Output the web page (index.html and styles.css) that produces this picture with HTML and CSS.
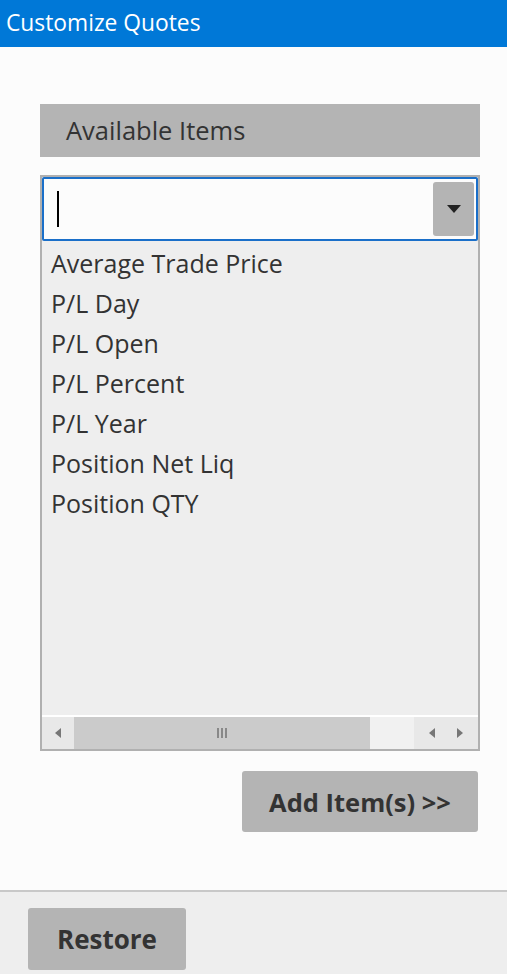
FILE: index.html
```html
<!DOCTYPE html>
<html>
<head>
<meta charset="utf-8">
<link rel="stylesheet" href="styles.css">
</head>
<body>
<div class="app">
  <header class="titlebar">Customize Quotes</header>
  <main class="content">
    <div class="section-head">Available Items</div>
    <div class="listbox">
      <div class="combo">
        <span class="caret"></span>
        <span class="drop-btn"><svg width="14" height="8" viewBox="0 0 14 8"><path d="M0 0H14L7 8Z" fill="#222"/></svg></span>
      </div>
      <ul class="items">
        <li>Average Trade Price</li>
        <li>P/L Day</li>
        <li>P/L Open</li>
        <li>P/L Percent</li>
        <li>P/L Year</li>
        <li>Position Net Liq</li>
        <li>Position QTY</li>
      </ul>
      <div class="hscroll">
        <span class="arr arr-left"><svg width="6" height="10" viewBox="0 0 6 10"><path d="M6 0V10L0 5Z" fill="#777"/></svg></span>
        <span class="thumb"><svg width="10" height="10" viewBox="0 0 10 10"><rect x="0" y="0" width="2" height="10" fill="#888"/><rect x="4" y="0" width="2" height="10" fill="#888"/><rect x="8" y="0" width="2" height="10" fill="#888"/></svg></span>
        <span class="track"></span>
        <span class="arr-pair">
          <svg width="6" height="10" viewBox="0 0 6 10"><path d="M6 0V10L0 5Z" fill="#777"/></svg>
          <svg width="6" height="10" viewBox="0 0 6 10"><path d="M0 0V10L6 5Z" fill="#777"/></svg>
        </span>
      </div>
    </div>
    <div class="actions">
      <button class="btn btn-add">Add Item(s) &gt;&gt;</button>
    </div>
  </main>
  <footer class="footer">
    <button class="btn btn-restore">Restore</button>
  </footer>
</div>
</body>
</html>
```
FILE: styles.css
```css
* { box-sizing: border-box; }
html, body { margin: 0; padding: 0; height: 100%; }
body {
  font-family: "Open Sans", "Noto Sans", sans-serif;
  background: #fcfcfc;
  color: #333;
}
.app {
  display: flex;
  flex-direction: column;
  height: 974px;
}
.titlebar {
  height: 47px;
  background: #0078d7;
  color: #fff;
  font-size: 22.8px;
  line-height: 46px;
  padding-left: 6px;
}
.content {
  flex: 1;
  padding: 57px 27px 0 40px;
}
.section-head {
  height: 53px;
  background: #b4b4b4;
  font-size: 25.5px;
  line-height: 53px;
  padding-left: 26px;
  color: #333;
}
.listbox {
  margin-top: 18px;
  height: 576px;
  border: 2px solid #b0b0b0;
  background: #eeeeee;
  display: flex;
  flex-direction: column;
}
.combo {
  height: 64px;
  border: 2px solid #1a6fc9;
  border-radius: 2px;
  background: #fcfcfc;
  display: flex;
  align-items: center;
  justify-content: space-between;
  padding: 0 2px 0 13px;
}
.caret {
  width: 2px;
  height: 36px;
  background: #000;
}
.drop-btn {
  width: 41px;
  height: 54px;
  background: #b4b4b4;
  border-radius: 3px;
  display: flex;
  align-items: center;
  justify-content: center;
}
.items {
  list-style: none;
  margin: 0;
  padding: 2px 0 0 9px;
  flex: 1;
  font-size: 25px;
  line-height: 40px;
  color: #333;
}
.hscroll {
  height: 34px;
  border-top: 2px solid #fff;
  display: flex;
  background: #e8e8e8;
}
.arr {
  width: 32px;
  display: flex;
  align-items: center;
  justify-content: center;
}
.thumb {
  width: 296px;
  background: #cbcbcb;
  display: flex;
  align-items: center;
  justify-content: center;
}
.track {
  width: 44px;
  background: #f1f1f1;
}
.arr-pair {
  flex: 1;
  display: flex;
  align-items: center;
  justify-content: space-around;
  padding: 0 4px;
}
.actions {
  display: flex;
  justify-content: flex-end;
  margin-top: 20px;
  padding-right: 2px;
}
.btn {
  font-family: "Open Sans", "Noto Sans", sans-serif;
  font-weight: bold;
  font-size: 25.5px;
  color: #333;
  background: #b4b4b4;
  border: none;
  border-radius: 3px;
  padding: 0;
}
.btn-add {
  width: 236px;
  height: 61px;
}
.footer {
  height: 84px;
  border-top: 2px solid #c8c8c8;
  background: #eeeeee;
  padding: 16px 0 0 28px;
}
.btn-restore {
  width: 158px;
  height: 62px;
  font-size: 26px;
}
```
